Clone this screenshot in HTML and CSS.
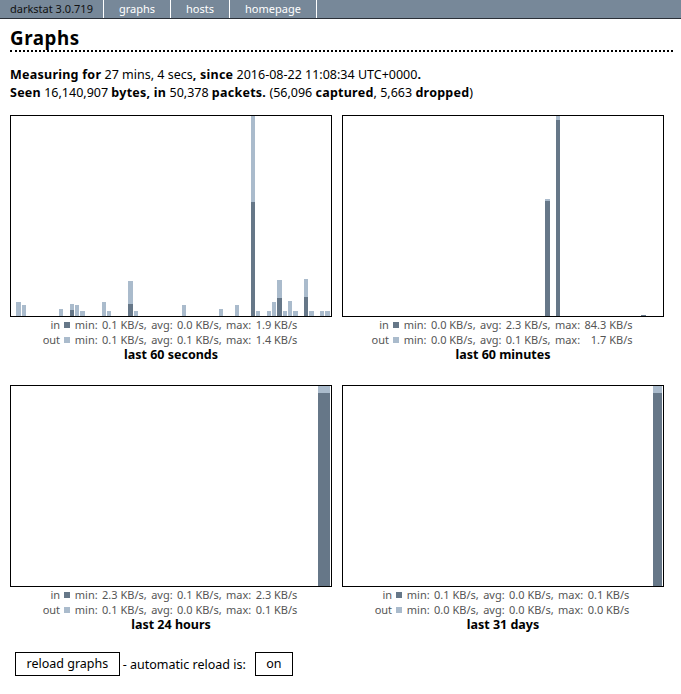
FILE: index.html
```html
<!DOCTYPE html>
<html>
<head>
<meta charset="utf-8">
<title>darkstat graphs</title>
<link rel="stylesheet" href="styles.css">
</head>
<body>
<div class="menu">
  <ul class="menu">
    <li class="label">darkstat 3.0.719</li>
    <li><a href="#">graphs</a></li>
    <li><a href="#">hosts</a></li>
    <li><a href="#">homepage</a></li>
  </ul>
</div>

<div class="content">
  <h2 class="pagetitle">Graphs</h2>
  <p class="summary">
    <b>Measuring for</b> 27 mins, 4 secs<b>, since</b> 2016-08-22 11:08:34 UTC+0000<b>.</b><br>
    <b>Seen</b> 16,140,907 <b>bytes, in</b> 50,378 <b>packets.</b> (56,096 <b>captured</b>, 5,663 <b>dropped</b>)
  </p>

  <div class="graphs">
    <div class="outergraph">
      <div class="graph" id="g0"></div>
      <div class="legendwrap">
        <table class="legend">
          <tr><td class="dir">in</td><td><span class="swatch sw-in"></span></td><td>min:</td><td class="num">0.1 KB/s,</td><td>avg:</td><td class="num">0.0 KB/s,</td><td>max:</td><td class="num">1.9 KB/s</td></tr>
          <tr><td class="dir">out</td><td><span class="swatch sw-out"></span></td><td>min:</td><td class="num">0.1 KB/s,</td><td>avg:</td><td class="num">0.1 KB/s,</td><td>max:</td><td class="num">1.4 KB/s</td></tr>
        </table>
      </div>
      <div class="gtitle">last 60 seconds</div>
    </div>

    <div class="outergraph">
      <div class="graph" id="g1"></div>
      <div class="legendwrap">
        <table class="legend">
          <tr><td class="dir">in</td><td><span class="swatch sw-in"></span></td><td>min:</td><td class="num">0.0 KB/s,</td><td>avg:</td><td class="num">2.3 KB/s,</td><td>max:</td><td class="num">84.3 KB/s</td></tr>
          <tr><td class="dir">out</td><td><span class="swatch sw-out"></span></td><td>min:</td><td class="num">0.0 KB/s,</td><td>avg:</td><td class="num">0.1 KB/s,</td><td>max:</td><td class="num">1.7 KB/s</td></tr>
        </table>
      </div>
      <div class="gtitle">last 60 minutes</div>
    </div>

    <div class="outergraph">
      <div class="graph" id="g2"></div>
      <div class="legendwrap">
        <table class="legend">
          <tr><td class="dir">in</td><td><span class="swatch sw-in"></span></td><td>min:</td><td class="num">2.3 KB/s,</td><td>avg:</td><td class="num">0.1 KB/s,</td><td>max:</td><td class="num">2.3 KB/s</td></tr>
          <tr><td class="dir">out</td><td><span class="swatch sw-out"></span></td><td>min:</td><td class="num">0.1 KB/s,</td><td>avg:</td><td class="num">0.0 KB/s,</td><td>max:</td><td class="num">0.1 KB/s</td></tr>
        </table>
      </div>
      <div class="gtitle">last 24 hours</div>
    </div>

    <div class="outergraph">
      <div class="graph" id="g3"></div>
      <div class="legendwrap">
        <table class="legend">
          <tr><td class="dir">in</td><td><span class="swatch sw-in"></span></td><td>min:</td><td class="num">0.1 KB/s,</td><td>avg:</td><td class="num">0.0 KB/s,</td><td>max:</td><td class="num">0.1 KB/s</td></tr>
          <tr><td class="dir">out</td><td><span class="swatch sw-out"></span></td><td>min:</td><td class="num">0.0 KB/s,</td><td>avg:</td><td class="num">0.0 KB/s,</td><td>max:</td><td class="num">0.0 KB/s</td></tr>
        </table>
      </div>
      <div class="gtitle">last 31 days</div>
    </div>
  </div>

  <div class="reload">
    <span class="button">reload graphs</span>
    <span class="reloadtext">- automatic reload is:</span>
    <span class="button toggle">on</span>
  </div>
</div>

<script src="graphs.js"></script>
</body>
</html>
```

FILE: styles.css
```css
body {
  margin: 0;
  padding: 0;
  font-family: "Noto Sans", "Open Sans", sans-serif;
  font-size: 12.5px;
  color: #000;
  background: #fff;
}

/* top navigation strip */
div.menu {
  background: #778899;
  border-bottom: 1px solid #2b3038;
  height: 18px;
}
ul.menu {
  margin: 0;
  padding: 0;
  list-style: none;
  display: flex;
  font-size: 11px;
  line-height: 18px;
}
ul.menu li {
  border-right: 1px solid #fff;
}
ul.menu li.label {
  padding: 0 10px;
  color: #111;
}
ul.menu a {
  display: block;
  padding: 0 15px;
  color: #fff;
  text-decoration: none;
}

.content {
  padding: 0 8px 0 10px;
}

h2.pagetitle {
  margin: 6px 0 0;
  font-size: 18.75px;
  line-height: 25px;
  font-weight: bold;
  letter-spacing: 0.6px;
  border-bottom: 2px dotted #000;
}

p.summary {
  margin: 14px 0 0;
  line-height: 18px;
}
p.summary b {
  letter-spacing: 0.25px;
}

/* graph grid */
.graphs {
  margin-top: 13px;
  display: grid;
  grid-template-columns: 322px 322px;
  column-gap: 10px;
  row-gap: 22px;
}
.outergraph {
  display: flex;
  flex-direction: column;
  align-items: center;
}
.graph {
  width: 320px;
  height: 200px;
  border: 1px solid #000;
  display: flex;
  align-items: stretch;
}
.col {
  flex: 1 1 0;
  min-width: 0;
  display: flex;
  flex-direction: column;
  justify-content: flex-end;
}
.bar {
  margin-right: 1px;
}
.bar.in { background: #667788; }
.bar.out { background: #aabbcc; }

.legendwrap {
  padding-right: 2px;
}
table.legend {
  border-collapse: collapse;
  font-size: 11px;
  line-height: 15px;
  color: #555;
}
table.legend td {
  padding: 0 2.2px;
  white-space: nowrap;
}
table.legend td.dir,
table.legend td.num {
  text-align: right;
}
.swatch {
  display: inline-block;
  width: 6px;
  height: 6px;
  margin-bottom: 1px;
}
.sw-in { background: #667788; }
.sw-out { background: #aabbcc; }

.gtitle {
  font-weight: bold;
  line-height: 16px;
}

/* reload controls */
.reload {
  margin-top: 19px;
  display: flex;
  align-items: center;
}
.button {
  border: 1px solid #000;
  padding: 2px 10.5px;
  line-height: 18px;
  margin-left: 5px;
}
.reloadtext {
  margin-left: 3px;
}
.button.toggle {
  margin-left: 9px;
}
```

FILE: graphs.js
```js
// Bar heights in pixels, [in, out], keyed by slot index.
var graphData = [
  { id: "g0", slots: 60, bars: {
    1: [0, 14], 2: [0, 11], 9: [0, 7], 11: [6, 6], 12: [0, 11], 13: [0, 5],
    17: [0, 14], 18: [0, 5], 22: [12, 23], 23: [0, 5], 32: [0, 11], 39: [0, 7],
    42: [0, 11], 45: [114, 86], 46: [0, 5], 48: [0, 5], 49: [0, 14], 50: [18, 18],
    51: [0, 5], 52: [0, 15], 53: [0, 5], 55: [19, 18], 56: [0, 5], 58: [0, 5], 59: [0, 5]
  } },
  { id: "g1", slots: 60, bars: { 38: [115, 2], 40: [196, 4], 56: [1, 0] } },
  { id: "g2", slots: 24, bars: { 23: [193, 7] } },
  { id: "g3", slots: 31, bars: { 30: [193, 7] } }
];

graphData.forEach(function (g) {
  var box = document.getElementById(g.id);
  for (var i = 0; i < g.slots; i++) {
    var col = document.createElement("div");
    col.className = "col";
    var b = g.bars[i];
    if (b) {
      if (b[1]) {
        var o = document.createElement("div");
        o.className = "bar out";
        o.style.height = b[1] + "px";
        col.appendChild(o);
      }
      if (b[0]) {
        var n = document.createElement("div");
        n.className = "bar in";
        n.style.height = b[0] + "px";
        col.appendChild(n);
      }
    }
    box.appendChild(col);
  }
});
```
